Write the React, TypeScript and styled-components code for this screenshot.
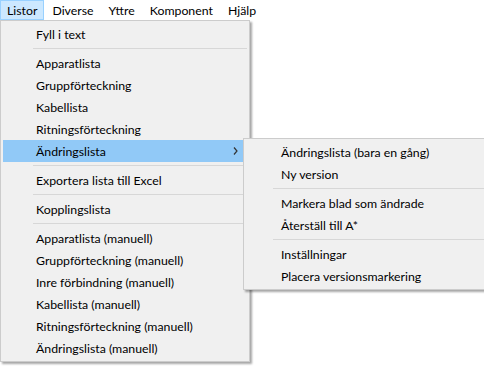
import React from "react";
import styled, { createGlobalStyle } from "styled-components";

const Global = createGlobalStyle`
  html, body { margin: 0; padding: 0; background: #ffffff; }
  body { font-family: "Lato", "Segoe UI", sans-serif; font-size: 12.3px; color: #000; }
  #root { width: 484px; height: 366px; position: relative; overflow: hidden; }
`;

const Page = styled.div`
  position: relative;
  width: 484px;
  height: 366px;
  background: #ffffff;
`;

const MenuBar = styled.div`
  display: flex;
  align-items: stretch;
  height: 20px;
  background: #ffffff;
`;

const BarItem = styled.div<{ $active?: boolean }>`
  display: flex;
  align-items: center;
  padding: 0 6px 0 6px;
  margin-right: 1px;
  box-sizing: border-box;
  height: 20px;
  border: 1px solid ${(p) => (p.$active ? "#99d1ff" : "transparent")};
  background: ${(p) => (p.$active ? "#cce8ff" : "transparent")};
  white-space: nowrap;
`;

const Dropdown = styled.div<{ $left: number; $top: number; $width: number }>`
  position: absolute;
  left: ${(p) => p.$left}px;
  top: ${(p) => p.$top}px;
  width: ${(p) => p.$width}px;
  box-sizing: border-box;
  background: #f0f0f0;
  border: 1px solid #cccccc;
  padding: 2px;
  box-shadow: 2px 2px 2px rgba(0, 0, 0, 0.35);
  display: flex;
  flex-direction: column;
`;

const Item = styled.div<{ $hover?: boolean; $indent: number }>`
  position: relative;
  display: flex;
  align-items: center;
  height: 22px;
  padding-left: ${(p) => p.$indent}px;
  background: ${(p) => (p.$hover ? "#91c9f7" : "transparent")};
  white-space: nowrap;
`;

const Chevron = styled.svg`
  position: absolute;
  right: 9px;
  top: 7px;
`;

const Separator = styled.div<{ $indent: number }>`
  height: 7px;
  display: flex;
  align-items: center;
  padding-left: ${(p) => p.$indent}px;
  &::after {
    content: "";
    flex: 1;
    height: 1px;
    background: #d7d7d7;
  }
`;

type Entry = { label: string; hover?: boolean; sub?: boolean } | "sep";

const mainItems: Entry[] = [
  { label: "Fyll i text" },
  "sep",
  { label: "Apparatlista" },
  { label: "Gruppförteckning" },
  { label: "Kabellista" },
  { label: "Ritningsförteckning" },
  { label: "Ändringslista", hover: true, sub: true },
  "sep",
  { label: "Exportera lista till Excel" },
  "sep",
  { label: "Kopplingslista" },
  "sep",
  { label: "Apparatlista (manuell)" },
  { label: "Gruppförteckning (manuell)" },
  { label: "Inre förbindning (manuell)" },
  { label: "Kabellista (manuell)" },
  { label: "Ritningsförteckning (manuell)" },
  { label: "Ändringslista (manuell)" },
];

const subItems: Entry[] = [
  { label: "Ändringslista (bara en gång)" },
  { label: "Ny version" },
  "sep",
  { label: "Markera blad som ändrade" },
  { label: "Återställ till A*" },
  "sep",
  { label: "Inställningar" },
  { label: "Placera versionsmarkering" },
];

function MenuList({ items, indent, sepIndent }: { items: Entry[]; indent: number; sepIndent: number }) {
  return (
    <>
      {items.map((it, i) =>
        it === "sep" ? (
          <Separator key={i} $indent={sepIndent} />
        ) : (
          <Item key={i} $hover={it.hover} $indent={indent}>
            {it.label}
            {it.sub && (
              <Chevron width="5" height="8" viewBox="0 0 5 8">
                <path d="M1 0.5 L4 4 L1 7.5" fill="none" stroke="#333" strokeWidth="1.2" />
              </Chevron>
            )}
          </Item>
        )
      )}
    </>
  );
}

export default function App() {
  return (
    <Page>
      <Global />
      <MenuBar>
        <BarItem $active>Listor</BarItem>
        <BarItem>Diverse</BarItem>
        <BarItem>Yttre</BarItem>
        <BarItem>Komponent</BarItem>
        <BarItem>Hjälp</BarItem>
      </MenuBar>
      <Dropdown $left={0} $top={20} $width={250}>
        <MenuList items={mainItems} indent={33} sepIndent={30} />
      </Dropdown>
      <Dropdown $left={243} $top={138} $width={260}>
        <MenuList items={subItems} indent={35} sepIndent={27} />
      </Dropdown>
    </Page>
  );
}
